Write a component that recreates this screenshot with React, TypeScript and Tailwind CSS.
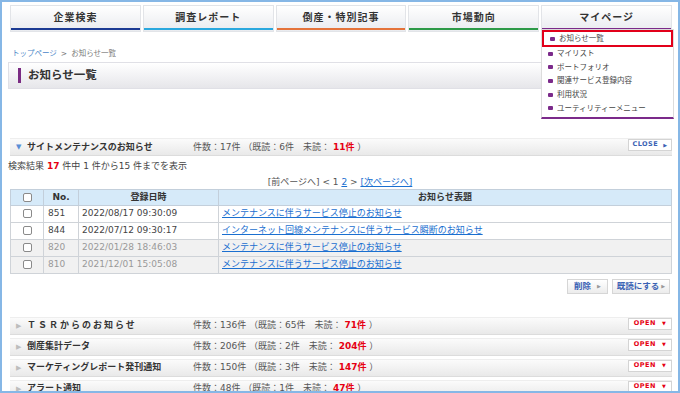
import React from "react";

const jp = { fontFamily: '"DejaVu Sans", "Noto Sans CJK JP", sans-serif' };

const tabs = [
  { label: "企業検索", line: "bg-[#1b3a93]" },
  { label: "調査レポート", line: "bg-[#2aa8de]" },
  { label: "倒産・特別記事", line: "bg-[#e4733a]" },
  { label: "市場動向", line: "bg-[#2d9a48]" },
  { label: "マイページ", line: "bg-[#7b2a8a]" },
];

const menu = [
  "お知らせ一覧",
  "マイリスト",
  "ポートフォリオ",
  "関連サービス登録内容",
  "利用状況",
  "ユーティリティーメニュー",
];

const rows = [
  { no: "851", date: "2022/08/17 09:30:09", title: "メンテナンスに伴うサービス停止のお知らせ", read: false },
  { no: "844", date: "2022/07/12 09:30:17", title: "インターネット回線メンテナンスに伴うサービス瞬断のお知らせ", read: false },
  { no: "820", date: "2022/01/28 18:46:03", title: "メンテナンスに伴うサービス停止のお知らせ", read: true },
  { no: "810", date: "2021/12/01 15:05:08", title: "メンテナンスに伴うサービス停止のお知らせ", read: true },
];

const closed = [
  { title: "ＴＳＲからのお知らせ", total: "136", read: "65", unread: "71", wide: true },
  { title: "倒産集計データ", total: "206", read: "2", unread: "204" },
  { title: "マーケティングレポート発刊通知", total: "150", read: "3", unread: "147" },
  { title: "アラート通知", total: "48", read: "1", unread: "47" },
];

function Box() {
  return <span className="inline-block w-[9px] h-[9px] rounded-[2px] border border-[#8a8a8a] bg-white" />;
}

function SectionBar({
  open,
  title,
  total,
  read,
  unread,
  wide,
}: {
  open: boolean;
  title: string;
  total: string;
  read: string;
  unread: string;
  wide?: boolean;
}) {
  return (
    <div className="flex items-center h-[17px] bg-gradient-to-b from-[#fbfbfb] to-[#e9e9e9] border-t border-[#eeeeee] shadow-[0_1px_0_#dcdcdc]">
      <span className={`w-[17px] pl-[6px] text-[7px] ${open ? "text-[#5a8ed6]" : "text-[#bdbdbd]"}`}>
        {open ? "▼" : "▶"}
      </span>
      <span className={`w-[166px] text-[9px] font-bold text-[#333] whitespace-nowrap ${wide ? "tracking-[2px]" : ""}`}>
        {title}
      </span>
      <span className="text-[9px] text-[#555] whitespace-nowrap">
        件数：{total}件 （既読：{read}件　未読： <b className="text-[#e60012]">{unread}件</b> ）
      </span>
      <span className="ml-auto self-start">
        {open ? (
          <span className="flex items-center justify-center gap-[5px] w-[44px] h-[12px] bg-white border border-[#d4d4d4] text-[6.5px] font-bold tracking-[0.5px] text-[#3a62b4]">
            CLOSE <span className="text-[5px]">▶</span>
          </span>
        ) : (
          <span className="flex items-center justify-center gap-[6px] w-[44px] h-[12px] bg-white border border-[#d4d4d4] text-[6.5px] font-bold tracking-[0.5px] text-[#e60012]">
            OPEN <span className="text-[5px]">▼</span>
          </span>
        )}
      </span>
    </div>
  );
}

export default function App() {
  return (
    <div className="relative w-[680px] h-[393px] overflow-hidden bg-white border-2 border-[#86b7e6]" style={jp}>
      {/* Global nav */}
      <div className="flex gap-[2px] ml-[8px] mr-[6px] mt-[3px] h-[27px]">
        {tabs.map((t) => (
          <div
            key={t.label}
            className="relative flex-1 flex items-center justify-center bg-gradient-to-b from-white to-[#e9ebef] border border-[#e2e4e8]"
          >
            <span className="text-[10px] font-bold tracking-[1px] text-[#333] pb-[2px]">{t.label}</span>
            <span className={`absolute left-0 right-0 bottom-[1px] h-[2px] ${t.line}`} />
          </div>
        ))}
      </div>

      {/* My page dropdown */}
      <div className="absolute left-[539px] top-[27px] w-[133px] bg-white border border-[#dcdcdc] border-b-2 border-b-[#7b2a8a] pb-[2px] z-10">
        {menu.map((m, i) => (
          <div
            key={m}
            className={`flex items-center gap-[4px] pl-[6px] text-[7.5px] text-[#444] ${
              i === 0 ? "h-[17px] border-2 border-[#e2001a]" : "h-[13.6px]"
            }`}
          >
            <span className="inline-block w-[5px] h-[4px] rounded-[1px] bg-[#7b2a8a]" />
            {m}
          </div>
        ))}
      </div>

      {/* Breadcrumb */}
      <div className="mt-[16px] ml-[10px] text-[7.5px] text-[#777]">
        <span className="text-[#4a86c8]">トップページ</span>
        <span className="mx-[4px]">&gt;</span>
        お知らせ一覧
      </div>

      {/* Page title */}
      <div className="flex items-center mt-[3px] ml-[6px] mr-[6px] h-[27px] border border-[#e0e0e6] bg-gradient-to-b from-white to-[#e6e6ea]">
        <span className="ml-[9px] w-[3px] h-[15px] bg-[#7a2b83]" />
        <span className="ml-[7px] text-[11.5px] font-bold text-[#333]">お知らせ一覧</span>
      </div>

      {/* Open section */}
      <div className="mt-[49px] ml-[8px] mr-[6px]">
        <SectionBar open title="サイトメンテナンスのお知らせ" total="17" read="6" unread="11" />
      </div>

      <div className="mt-[5px] ml-[6px] text-[9px] text-[#444]">
        検索結果 <b className="text-[#e60012]">17</b> 件中 1 件から15 件までを表示
      </div>

      <div className="mt-[2px] text-center text-[9px] text-[#555] leading-[12px]">
        [前ページへ] &lt; 1 <span className="text-[#1a6fd0] underline">2</span> &gt;{" "}
        <span className="text-[#1a6fd0] underline">[次ページへ]</span>
      </div>

      {/* Table */}
      <table className="ml-[8px] mt-[1px] w-[662px] border-collapse text-[9px]">
        <thead>
          <tr className="bg-[#d6eaf9] h-[16px]">
            <th className="w-[33px] border border-[#c3cfdb]">
              <div className="flex justify-center"><Box /></div>
            </th>
            <th className="w-[35px] border border-[#c3cfdb] text-[#333] font-bold">No.</th>
            <th className="w-[140px] border border-[#c3cfdb] text-[#333] font-bold">登録日時</th>
            <th className="border border-[#c3cfdb] text-[#333] font-bold">お知らせ表題</th>
          </tr>
        </thead>
        <tbody>
          {rows.map((r) => (
            <tr key={r.no} className={`h-[17px] ${r.read ? "bg-[#f1f1f1] text-[#999]" : "bg-white text-[#444]"}`}>
              <td className="border border-[#cfd3d8]">
                <div className="flex justify-center"><Box /></div>
              </td>
              <td className="border border-[#cfd3d8] pl-[4px]">{r.no}</td>
              <td className="border border-[#cfd3d8] pl-[3px] whitespace-nowrap">{r.date}</td>
              <td className="border border-[#cfd3d8] pl-[3px]">
                <span className="text-[#1a6fd0] underline">{r.title}</span>
              </td>
            </tr>
          ))}
        </tbody>
      </table>

      {/* Actions */}
      <div className="flex justify-end gap-[4px] mt-[5px] mr-[8px]">
        <span className="flex items-center justify-center gap-[6px] w-[41px] h-[15px] bg-gradient-to-b from-white to-[#ececec] border border-[#d6d6d6] text-[8.5px] font-bold text-[#3a62b4]">
          削除 <span className="text-[5px] text-[#999]">▶</span>
        </span>
        <span className="flex items-center justify-center gap-[2px] w-[58px] h-[15px] bg-gradient-to-b from-white to-[#ececec] border border-[#d6d6d6] text-[8.5px] font-bold text-[#3a62b4]">
          既読にする <span className="text-[5px] text-[#999]">▶</span>
        </span>
      </div>

      {/* Closed sections */}
      <div className="flex flex-col gap-[4px] mt-[23px] ml-[8px] mr-[6px]">
        {closed.map((c) => (
          <SectionBar key={c.title} open={false} {...c} />
        ))}
      </div>
    </div>
  );
}
